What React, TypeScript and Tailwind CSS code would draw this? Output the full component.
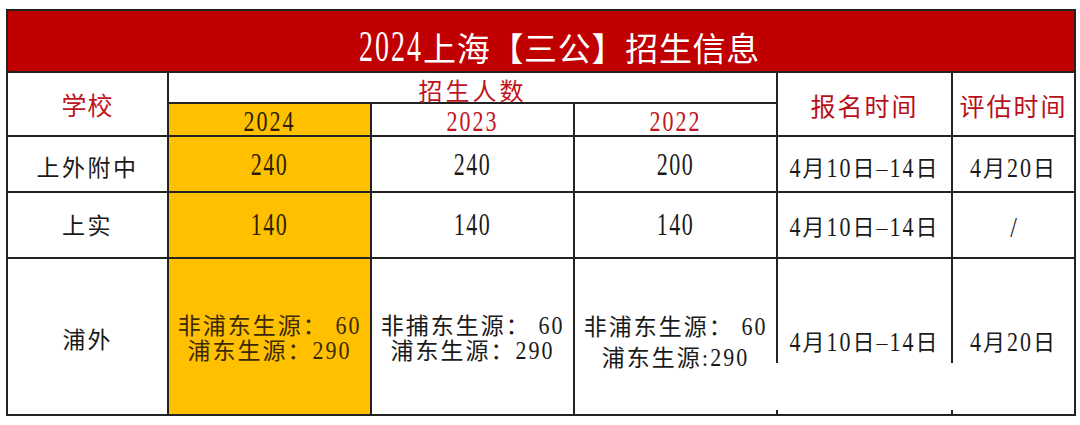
import type { ReactNode } from 'react';

// 数字在原图里是窄长的衬线体，用纵向拉伸模拟
const Num = ({ children, className }: { children: ReactNode; className: string }) => (
  <span className={`inline-block leading-none ${className}`}>{children}</span>
);

const cell = 'border-r-2 border-b-2 border-[#222] flex items-center justify-center';
const red = 'text-[#c0141e]';

const BodyNum = ({ v }: { v: string }) => (
  <Num className="text-[22px] tracking-[1.5px] scale-y-[1.42] origin-[50%_70%]">{v}</Num>
);

const YearNum = ({ v }: { v: string }) => (
  <Num className="text-[22px] tracking-[2px] scale-y-[1.3] origin-[50%_70%]">{v}</Num>
);

const DateNum = ({ v }: { v: string }) => (
  <Num className="text-[22px] scale-y-[1.2] origin-[50%_70%]">{v}</Num>
);

const RangeDate = () => (
  <span className="text-[22px] tracking-[2px] leading-none">
    <DateNum v="4" />月<DateNum v="10" />日–<DateNum v="14" />日
  </span>
);

const EvalDate = () => (
  <span className="text-[22px] tracking-[2px] leading-none">
    <DateNum v="4" />月<DateNum v="20" />日
  </span>
);

const SrcNum = ({ v }: { v: string }) => (
  <Num className="text-[22px] tracking-[2px] scale-y-[1.12] origin-[50%_70%]">{v}</Num>
);

// 最后一行右侧断开的竖线
const BrokenLine = () => (
  <div className="w-[2px] flex flex-col">
    <div className="h-[104px] bg-[#222]" />
    <div className="flex-1" />
    <div className="h-[4px] bg-[#222]" />
  </div>
);

export default function App() {
  return (
    <div className="w-[1080px] h-[425px] bg-white pt-[9px] pl-[6px] font-['Liberation_Serif','Noto_Sans_CJK_SC',serif] text-[#1a1a1a]">
      <div className="grid grid-cols-[161px_203px_203px_203px_175px_123px] grid-rows-[62px_31px_33px_56px_66px_157px] w-[1070px] border-l-2 border-t-2 border-[#222]">
        {/* 标题 */}
        <div className={`${cell} col-span-6 bg-[#c00000] text-white text-[33px] tracking-[0.7px] leading-none pt-[18px] pl-[37px]`}>
          <Num className="text-[28px] tracking-[2px] scale-y-[1.6] origin-[50%_68%]">2024</Num>上海【三公】招生信息
        </div>

        {/* 表头 */}
        <div className={`${cell} row-span-2 ${red} text-[25px] tracking-[1px] leading-none pt-[4px]`}>学校</div>
        <div className={`${cell} col-span-3 ${red} text-[24px] tracking-[3px] leading-none pt-[8px]`}>招生人数</div>
        <div className={`${cell} row-span-2 text-[#b8101a] text-[25px] tracking-[2px] leading-none pt-[6px]`}>报名时间</div>
        <div className={`${cell} row-span-2 text-[#b8101a] text-[25px] tracking-[2px] leading-none pt-[6px]`}>评估时间</div>
        <div className={`${cell} bg-[#ffc000] text-[#2a1f00] pt-[7px]`}><YearNum v="2024" /></div>
        <div className={`${cell} ${red} pt-[7px]`}><YearNum v="2023" /></div>
        <div className={`${cell} ${red} pt-[7px]`}><YearNum v="2022" /></div>

        {/* 上外附中 */}
        <div className={`${cell} text-[23px] tracking-[2.5px] leading-none pt-[8px]`}>上外附中</div>
        <div className={`${cell} bg-[#ffc000] text-[#2a1f00] pt-[6px]`}><BodyNum v="240" /></div>
        <div className={`${cell} pt-[6px]`}><BodyNum v="240" /></div>
        <div className={`${cell} pt-[6px]`}><BodyNum v="200" /></div>
        <div className={`${cell} pt-[9px]`}><RangeDate /></div>
        <div className={`${cell} pt-[9px]`}><EvalDate /></div>

        {/* 上实 */}
        <div className={`${cell} text-[23px] tracking-[2.5px] leading-none pt-[3px]`}>上实</div>
        <div className={`${cell} bg-[#ffc000] text-[#2a1f00] pt-[4px]`}><BodyNum v="140" /></div>
        <div className={`${cell} pt-[4px]`}><BodyNum v="140" /></div>
        <div className={`${cell} pt-[4px]`}><BodyNum v="140" /></div>
        <div className={`${cell} pt-[6px]`}><RangeDate /></div>
        <div className={`${cell} pt-[6px]`}>
          <Num className="text-[24px] scale-y-[1.25] origin-[50%_70%]">/</Num>
        </div>

        {/* 浦外 */}
        <div className={`${cell} text-[23px] tracking-[2px] leading-none pt-[8px]`}>浦外</div>
        <div className={`${cell} bg-[#ffc000] text-[#3b2a05] pt-[4px]`}>
          <div className="flex flex-col items-center text-[23px] tracking-[2px] leading-[25px]">
            <span>非浦东生源： <SrcNum v="60" /></span>
            <span>浦东生源：<SrcNum v="290" /></span>
          </div>
        </div>
        <div className={`${cell} pt-[4px]`}>
          <div className="flex flex-col items-center text-[23px] tracking-[2px] leading-[25px]">
            <span>非捕东生源： <SrcNum v="60" /></span>
            <span>浦东生源：<SrcNum v="290" /></span>
          </div>
        </div>
        <div className="border-b-2 border-[#222] flex">
          <div className="flex-1 flex items-center justify-center pt-[12px]">
            <div className="flex flex-col items-center text-[23px] tracking-[2px] leading-[31px]">
              <span>非浦东生源： <SrcNum v="60" /></span>
              <span>浦东生源:<SrcNum v="290" /></span>
            </div>
          </div>
          <BrokenLine />
        </div>
        <div className="border-b-2 border-[#222] flex">
          <div className="flex-1 flex items-center justify-center pt-[12px]"><RangeDate /></div>
          <BrokenLine />
        </div>
        <div className={`${cell} pt-[12px]`}><EvalDate /></div>
      </div>
    </div>
  );
}
